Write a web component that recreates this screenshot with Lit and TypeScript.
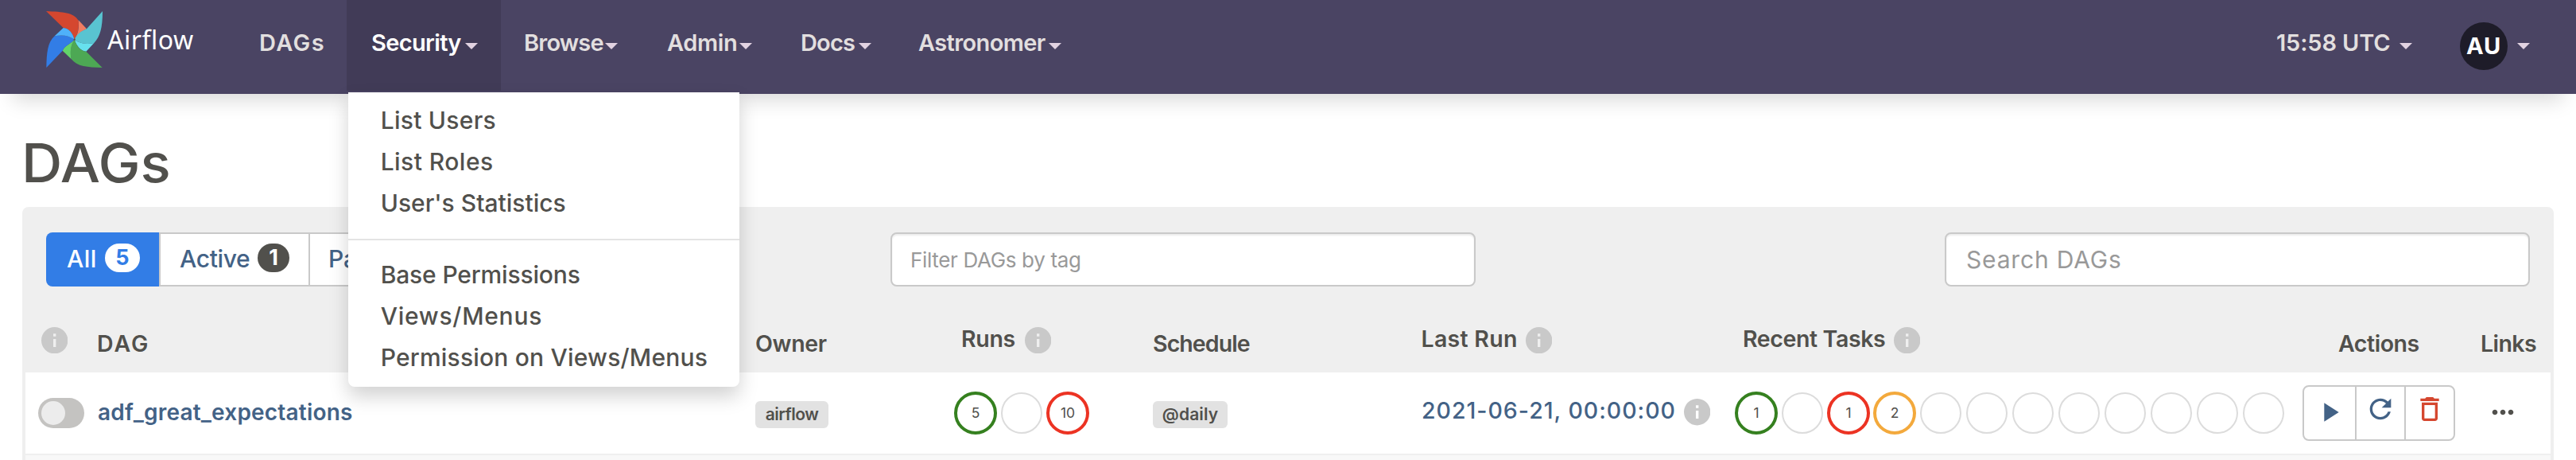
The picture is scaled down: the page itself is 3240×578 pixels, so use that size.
import { LitElement, html, css, svg } from 'lit';
import { customElement } from 'lit/decorators.js';

const ICONS = {
  info: 'M12 2C6.48 2 2 6.48 2 12s4.48 10 10 10 10-4.48 10-10S17.52 2 12 2zm1 15h-2v-6h2v6zm0-8h-2V7h2v2z',
  play: 'M8 5v14l11-7z',
  refresh:
    'M17.65 6.35C16.2 4.9 14.21 4 12 4c-4.42 0-7.99 3.58-7.99 8s3.57 8 7.99 8c3.73 0 6.84-2.55 7.73-6h-2.08c-.82 2.33-3.04 4-5.65 4-3.31 0-6-2.69-6-6s2.69-6 6-6c1.66 0 3.14.69 4.22 1.78L13 11h7V4l-2.35 2.35z',
  trash:
    'M16 9v10H8V9h8m-1.5-6h-5l-1 1H5v2h14V4h-3.5l-1-1zM18 7H6v12c0 1.1.9 2 2 2h8c1.1 0 2-.9 2-2V7z',
  more: 'M6 10c-1.1 0-2 .9-2 2s.9 2 2 2 2-.9 2-2-.9-2-2-2zm12 0c-1.1 0-2 .9-2 2s.9 2 2 2 2-.9 2-2-.9-2-2-2zm-6 0c-1.1 0-2 .9-2 2s.9 2 2 2 2-.9 2-2-.9-2-2-2z',
};

const icon = (name: keyof typeof ICONS, cls = '') =>
  html`<svg class="icon ${cls}" viewBox="0 0 24 24">${svg`<path d=${ICONS[name]} />`}</svg>`;
const info = () => html`<svg class="info" viewBox="2 2 20 20">${svg`<path d=${ICONS.info} />`}</svg>`;

const menu = [
  [
    { label: 'List Users', cls: 'm1' },
    { label: 'List Roles', cls: 'm2' },
    { label: "User's Statistics", cls: 'm3' },
  ],
  [
    { label: 'Base Permissions', cls: 'm4' },
    { label: 'Views/Menus', cls: 'm5' },
    { label: 'Permission on Views/Menus', cls: 'm6' },
  ],
];

const runs = [
  { state: 'success', count: '5' },
  { state: '', count: '' },
  { state: 'failed', count: '10' },
];
const tasks = [
  { state: 'success', count: '1' },
  { state: '', count: '' },
  { state: 'failed', count: '1' },
  { state: 'retry', count: '2' },
  ...Array.from({ length: 8 }, () => ({ state: '', count: '' })),
];

@customElement('app-root')
export class AppRoot extends LitElement {
  static styles = css`
    :host {
      display: block;
      height: 578px;
      overflow: hidden;
      background: #fff;
      color: #51504c;
      font-family: Inter, 'Liberation Sans', sans-serif;
      font-size: 30px;
      font-weight: 500;
      white-space: nowrap;
    }
    * { box-sizing: border-box; }
    svg { display: block; flex: none; fill: currentColor; }

    .header {
      position: relative;
      display: flex;
      height: 118px;
      background: #4a4463;
      box-shadow: 0 24px 24px -16px rgba(0, 0, 0, 0.15);
      color: #e2dfdf;
      font-size: 29px;
      font-weight: 600;
      line-height: 36px;
    }
    .brand { display: flex; width: 325px; padding: 14px 0 0 58px; color: #fff; }
    .pinwheel { width: 71px; height: 71px; margin-right: 6px; }
    .brand span { padding-top: 14px; font: 400 32px/44px 'Noto Sans', sans-serif; letter-spacing: 0.5px; }
    .nav { display: flex; }
    .item { position: relative; height: 114px; padding-top: 36px; }
    .link { display: flex; justify-content: space-between; }
    .link span { margin-left: 1px; }
    .caret {
      width: 16px;
      height: 8px;
      margin-top: 18px;
      background: #e2d3e2;
      clip-path: polygon(0 0, 100% 0, 50% 100%);
    }
    .dags { width: 111px; padding-left: 1px; letter-spacing: 1.4px; }
    .security { width: 194px; padding-left: 30px; padding-right: 29px; background: #413b57; color: #fff; letter-spacing: -0.65px; }
    .browse { width: 208px; padding-left: 28px; padding-right: 61px; letter-spacing: -0.8px; }
    .admin { width: 168px; padding-right: 60px; letter-spacing: -0.36px; }
    .docs { width: 148px; padding-right: 58px; letter-spacing: -0.83px; }
    .astro { width: 181px; letter-spacing: -0.6px; }
    .right { display: flex; margin-left: auto; padding-right: 58px; }
    .clock { width: 172px; letter-spacing: -0.15px; }
    .user { display: flex; margin: 28px 0 0 60px; }
    .avatar {
      width: 60px;
      height: 60px;
      border-radius: 50%;
      background: #1e1c29;
      color: #fff;
      font-weight: 700;
      letter-spacing: 0.8px;
      line-height: 60px;
      text-align: center;
    }
    .user .caret { margin: 26px 0 0 12px; }

    .menu {
      position: absolute;
      z-index: 5;
      left: 2px;
      top: 116px;
      width: 492px;
      height: 370px;
      padding-top: 9px;
      border-radius: 0 0 8px 8px;
      background: #fff;
      box-shadow: 0 12px 24px rgba(0, 0, 0, 0.18);
      color: #51504c;
      font-size: 30px;
      font-weight: 500;
      line-height: 52px;
    }
    .menu a { display: block; padding-left: 40.7px; }
    .divider { height: 2px; margin: 19px 0 17px; background: #e4e4e4; }
    .m1 { letter-spacing: 0.26px; }
    .m2 { letter-spacing: 0.45px; }
    .m3 { letter-spacing: 0; }
    .m4 { letter-spacing: -0.16px; }
    .m5 { letter-spacing: 0.73px; }
    .m6 { letter-spacing: 0.2px; }

    h1 { height: 142px; margin: 0; padding: 47px 0 0 27px; font-size: 67px; font-weight: 500; line-height: 80px; letter-spacing: 0; }
    h1 span { display: inline-block; transform: scaleX(1.06); transform-origin: left; }

    .panel { height: 318px; margin: 0 28px; padding: 32px 4px 0; border-radius: 8px 8px 0 0; background: #efefef; }
    .toolbar { display: grid; grid-template-columns: 1062px 1326px 736px; padding: 0 26px; }
    .tabs { display: flex; width: 736px; height: 68px; color: #436286; }
    .tab { display: flex; border: 2px solid #c9c9c9; border-left: 0; background: #fff; line-height: 62px; }
    .all { width: 144px; padding-left: 26px; border: 0; border-right: 2px solid #c9c9c9; border-radius: 8px 0 0 8px; background: #327de6; background-clip: padding-box; color: #fff; line-height: 66px; letter-spacing: 0.5px; }
    .active { width: 188px; padding-left: 24px; letter-spacing: -0.36px; }
    .paused { width: 180px; padding-left: 23px; border-radius: 0 8px 8px 0; }
    .pill { height: 36px; margin-top: 12px; border-radius: 18px; background: #51504c; color: #fff; font-size: 27px; font-weight: 700; line-height: 35px; text-align: center; letter-spacing: 0; }
    .all .pill { width: 44px; margin: 14px 24px 0 auto; background: #fff; color: #327de6; }
    .all .pill { margin-right: 24px; }
    .active .pill { width: 40px; margin-left: auto; margin-right: 24px; }
    .field {
      width: 736px;
      height: 68px;
      padding-left: 25px;
      border: 2px solid #c9c9c9;
      border-radius: 8px;
      background: #fff;
      box-shadow: inset 0 2px 2px rgba(0, 0, 0, 0.075);
      color: #999;
      line-height: 65px;
    }
    .filter { padding-left: 23px; font-size: 26px; font-weight: 400; letter-spacing: -0.34px; }
    .search { font-weight: 400; letter-spacing: 0.83px; }

    .row { display: grid; grid-template-columns: 92px 826px 250px 250px 339px 393px 714px 226px 86px; }
    .head { height: 108px; font-size: 28.5px; font-weight: 600; line-height: 34px; }
    .head > div { display: flex; padding-top: 55px; }
    .head > .up { padding-top: 49px; }
    .info { width: 33.4px; height: 33.4px; color: #c9c9c9; }
    .up .info { margin: 2px 0 0 auto; }
    .head > .h-info { padding: 51px 0 0 20px; }
    .head > .h-dag { margin-left: -2px; letter-spacing: 2px; }
    .h-owner { letter-spacing: -0.35px; }
    .h-runs { width: 113px; margin-left: 9px; letter-spacing: -0.29px; }
    .h-sched { letter-spacing: -0.91px; }
    .h-last { width: 164.5px; margin-left: -1.5px; letter-spacing: 0.28px; }
    .h-tasks { width: 223px; margin-left: 10px; letter-spacing: -0.38px; }
    .h-act { padding-left: 45px; letter-spacing: -0.44px; }
    .h-links { margin-left: -2px; letter-spacing: -0.56px; }

    .body { height: 102px; background: #fff; align-items: center; }
    .toggle { width: 58px; height: 38px; margin-left: 16px; padding: 4px; border-radius: 19px; background: #c4c3c1; }
    .knob { width: 30px; height: 30px; border-radius: 50%; background: #ececec; }
    .name { margin: -2px 0 0 -1px; color: #436286; font-size: 28px; font-weight: 600; letter-spacing: 0.2px; }
    .label { width: 92px; height: 34px; margin-top: 4px; border-radius: 6px; background: #e2e2e2; font-size: 21px; font-weight: 600; line-height: 33px; text-align: center; letter-spacing: -0.5px; }
    .daily { width: 94px; letter-spacing: 0.1px; }
    .circles { display: flex; gap: 4px; }
    .circle { width: 52px; height: 52px; margin: 1px; border: 2px solid #dcdcdc; border-radius: 50%; font-size: 17.5px; font-weight: 400; line-height: 45px; text-align: center; }
    .circle.success, .circle.failed, .circle.retry { width: 54px; height: 54px; margin: 0; border-width: 4px; }
    .circle.success { border-color: #35801f; }
    .circle.failed { border-color: #ec3323; }
    .circle.retry { border-color: #f3a93c; }
    .date { display: flex; justify-content: space-between; width: 363px; margin: -2px 0 0 -1px; color: #436286; font-size: 28.5px; line-height: 34px; letter-spacing: 0.99px; }
    .date span { margin-top: -2px; }
    .actions { display: flex; width: 192px; height: 70px; border: 2px solid #c9c9c9; border-radius: 8px; color: #436286; }
    .btn { display: flex; justify-content: center; width: 62px; padding-top: 12px; border-left: 2px solid #c9c9c9; }
    .btn:first-child { width: 64px; border: 0; }
    .icon { width: 40px; height: 40px; }
    .i-up { margin-top: -4px; }
    .red { color: #d5472f; }
    .more { margin: -2px 0 0 5.5px; }
    .next { height: 8px; border-top: 2px solid #efefef; background: #f8f8f8; }
  `;

  private circles(list: { state: string; count: string }[]) {
    return html`<div class="circles">${list.map((c) => html`<div class="circle ${c.state}">${c.count}</div>`)}</div>`;
  }

  private navLink(cls: string, label: string) {
    return html`<div class="item ${cls}"><div class="link"><span>${label}</span><i class="caret"></i></div></div>`;
  }

  render() {
    return html`
      <header class="header">
        <div class="brand">
          <svg class="pinwheel" viewBox="25 27 213 213">
            <path fill="#d5472f" d="M25 27C90 30 128 32 147 62C150 95 143 115 132 134C127 115 115 92 90 90Z" />
            <path fill="#f07d62" d="M147 61L178 94C158 103 143 115 132 134C147 110 150 90 147 61Z" />
            <path fill="#59c4d1" d="M238 27L178 94C155 103 141 115 132 134C155 151 180 152 206 147C229 122 238 90 238 27Z" />
            <path fill="#67e1ee" d="M132 134C155 151 180 152 206 147L176 179C155 177 140 158 132 134Z" />
            <path fill="#4da854" d="M237 240L176 179C153 176 140 158 132 134C117 156 115 182 120 208C142 236 180 239 237 240Z" />
            <path fill="#63d469" d="M132 134C118 150 96 155 87 176L120 208C115 182 117 156 132 134Z" />
            <path fill="#327de6" d="M26 240L87 176C96 155 118 150 132 134C110 118 85 115 57 121C30 145 27 185 26 240Z" />
            <path fill="#4fb1fa" d="M57 121L90 90C113 92 126 112 132 134C110 118 85 115 57 121Z" />
            <circle cx="132" cy="134" r="3.5" fill="#51504c" />
          </svg>
          <span>Airflow</span>
        </div>
        <nav class="nav">
          <div class="item dags">DAGs</div>
          <div class="item security">
            <div class="link"><span>Security</span><i class="caret"></i></div>
            <div class="menu">
              ${menu.map(
                (group, i) => html`
                  ${i ? html`<div class="divider"></div>` : ''}
                  ${group.map((m) => html`<a class=${m.cls}>${m.label}</a>`)}
                `,
              )}
            </div>
          </div>
          ${this.navLink('browse', 'Browse')} ${this.navLink('admin', 'Admin')}
          ${this.navLink('docs', 'Docs')} ${this.navLink('astro', 'Astronomer')}
        </nav>
        <div class="right">
          ${this.navLink('clock', '15:58 UTC')}
          <div class="user"><div class="avatar">AU</div><i class="caret"></i></div>
        </div>
      </header>

      <h1><span>DAGs</span></h1>

      <section class="panel">
        <div class="toolbar">
          <div class="tabs">
            <div class="tab all">All<span class="pill">5</span></div>
            <div class="tab active">Active<span class="pill">1</span></div>
            <div class="tab paused">Paused</div>
          </div>
          <div class="field filter">Filter DAGs by tag</div>
          <div class="field search">Search DAGs</div>
        </div>
        <div class="row head">
          <div class="h-info">${info()}</div>
          <div class="h-dag">DAG</div>
          <div class="h-owner">Owner</div>
          <div class="up h-runs">Runs${info()}</div>
          <div class="h-sched">Schedule</div>
          <div class="up h-last">Last Run${info()}</div>
          <div class="up h-tasks">Recent Tasks${info()}</div>
          <div class="h-act">Actions</div>
          <div class="h-links">Links</div>
        </div>
        <div class="row body">
          <div class="toggle"><div class="knob"></div></div>
          <div class="name">adf_great_expectations</div>
          <div class="label">airflow</div>
          ${this.circles(runs)}
          <div class="label daily">@daily</div>
          <div class="date"><span>2021-06-21, 00:00:00</span>${info()}</div>
          ${this.circles(tasks)}
          <div class="actions">
            <div class="btn">${icon('play')}</div>
            <div class="btn">${icon('refresh', 'i-up')}</div>
            <div class="btn">${icon('trash', 'i-up red')}</div>
          </div>
          ${icon('more', 'more')}
        </div>
        <div class="next"></div>
      </section>
    `;
  }
}
